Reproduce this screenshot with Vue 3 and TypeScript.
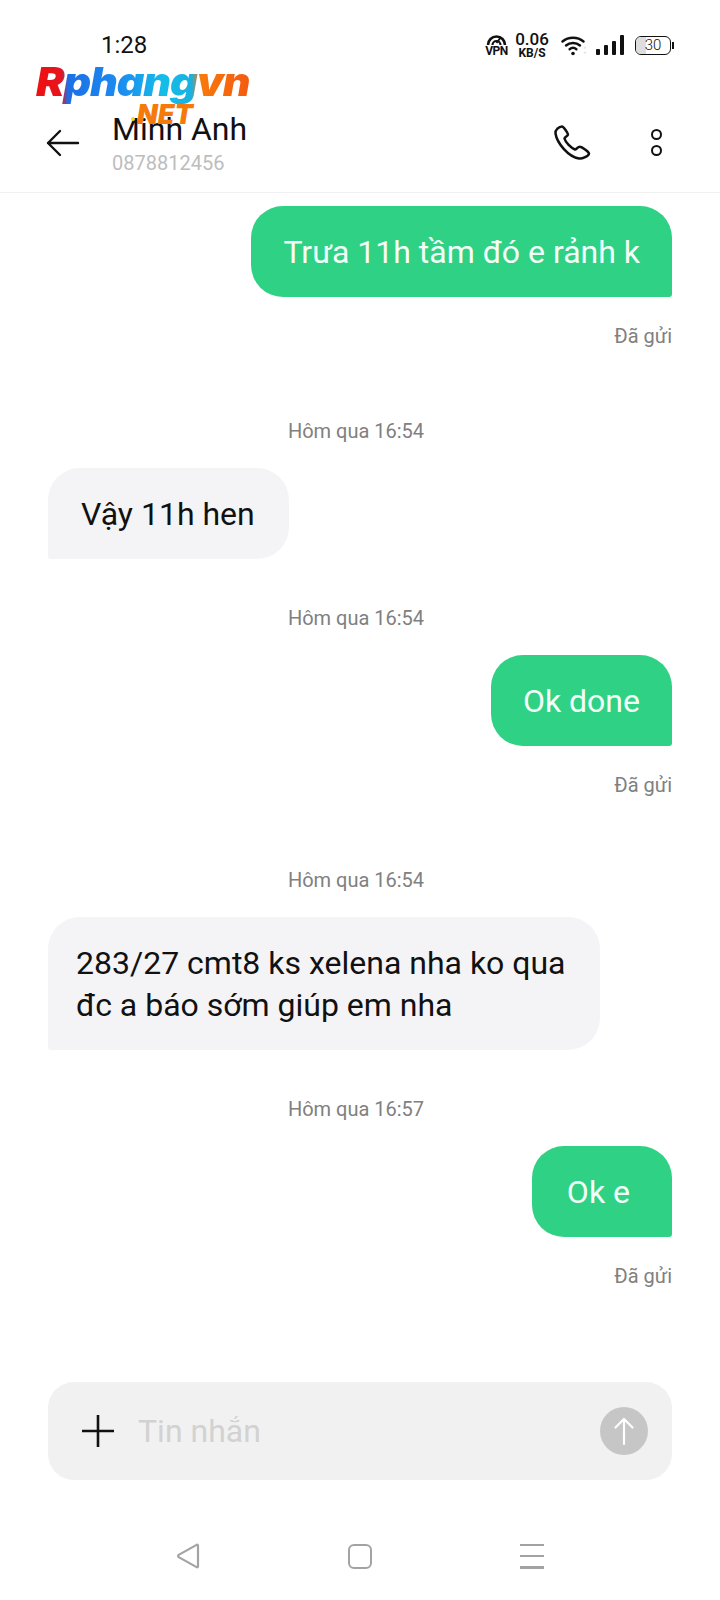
<template>
  <div class="phone">
    <div class="status-bar">
      <span class="clock">1:28</span>
      <div class="status-icons">
        <div class="vpn">
          <svg width="21" height="12" viewBox="0 0 21 12" fill="none" stroke="#111" stroke-width="2.6">
            <path d="M2 11a8.500 8.500 0 0 1 17 0" />
            <path d="M6.500 11a4 4 0 0 1 8 0" stroke-width="2.200" />
            <path d="M10.500 9l4.500-6" stroke-width="1.800" />
          </svg>
          <span>VPN</span>
        </div>
        <div class="speed">
          <span class="speed-value">0.06</span>
          <span class="speed-unit">KB/S</span>
        </div>
        <svg class="wifi" width="27" height="21" viewBox="0 0 27 21" fill="none" stroke="#111" stroke-width="2.400" stroke-linecap="round">
          <path d="M1.500 6.500c6-5 15-5 21 0" />
          <path d="M5 10.500c4-3.400 10-3.400 14 0" />
          <path d="M8.600 14.200c2-1.600 4.800-1.600 6.800 0" />
          <circle cx="12" cy="18.500" r="1.800" fill="#111" stroke="none" />
          <path d="M24 11.500l1.500 2h-3zM24 19l1.500-2h-3z" fill="#ddd" stroke="none" />
        </svg>
        <div class="signal">
          <i v-for="h in signalBars" :key="h" :style="{ height: h + 'px' }"></i>
        </div>
        <div class="battery">
          <div class="battery-body">
            <div class="battery-fill"></div>
            <span>30</span>
          </div>
          <div class="battery-tip"></div>
        </div>
      </div>
    </div>

    <div class="logo">
      <span class="logo-main">Rphangvn</span>
      <i class="logo-dot"></i>
      <span class="logo-net">NET</span>
    </div>

    <header class="header">
      <svg class="back" width="34" height="28" viewBox="0 0 34 28" fill="none" stroke="#111" stroke-width="2.400" stroke-linecap="round" stroke-linejoin="round">
        <path d="M32 14H2M14 2L2 14l12 12" />
      </svg>
      <div class="contact">
        <div class="contact-name">Minh Anh</div>
        <div class="contact-number">0878812456</div>
      </div>
      <svg class="call" width="38" height="36" viewBox="0 0 38 36" fill="none" stroke="#111" stroke-width="2.500" stroke-linejoin="round">
        <path d="M2.500 8.500C2 5 6 1.500 9 1.500c1.500 0 6 6.500 6 8s-3.500 2.500-3.500 4c1 4 6.500 9.500 10.500 11 1.500 0 3-3 5-2.700 2 .2 8.500 4.700 9 6.700 0 2.500-7 5.500-10 5C15 31.500 4 18 2.500 8.500z" />
      </svg>
      <div class="more">
        <i></i>
        <i></i>
      </div>
    </header>

    <main class="messages">
      <template v-for="item in thread" :key="item.id">
        <div v-if="item.time" class="time">{{ item.time }}</div>
        <div class="bubble" :class="[item.sent ? 'sent' : 'received', item.cls]">
          <div v-for="(line, i) in item.lines" :key="i">{{ line }}</div>
        </div>
        <div v-if="item.sent" class="delivered">Đã gửi</div>
      </template>
    </main>

    <div class="composer">
      <svg width="34" height="34" viewBox="0 0 34 34" stroke="#111" stroke-width="2.600">
        <path d="M17 1v32M1 17h32" />
      </svg>
      <span class="placeholder">Tin nhắn</span>
      <div class="send">
        <svg width="22" height="30" viewBox="0 0 22 30" fill="none" stroke="#fff" stroke-width="2.200" stroke-linecap="round" stroke-linejoin="round">
          <path d="M11 28V3M2.500 11.500L11 3l8.500 8.500" />
        </svg>
      </div>
    </div>

    <nav class="nav">
      <svg width="24" height="26" viewBox="0 0 24 26" fill="none" stroke="#a3a3a3" stroke-width="2.200" stroke-linejoin="round">
        <path d="M22 2.500v21c0 .8-.8 1-1.400.6L2.700 14.100c-.8-.5-.8-1.700 0-2.200L20.600 1.900c.6-.4 1.400-.1 1.400.6z" />
      </svg>
      <div class="nav-home"></div>
      <div class="nav-menu">
        <i></i>
        <i></i>
        <i></i>
      </div>
    </nav>
  </div>
</template>

<script setup lang="ts">
interface Message {
  id: number
  time?: string
  sent: boolean
  lines: string[]
  cls?: string
}

const signalBars = [6, 10, 14, 20]

const thread: Message[] = [
  { id: 1, sent: true, lines: ['Trưa 11h tầm đó e rảnh k'] },
  { id: 2, time: 'Hôm qua 16:54', sent: false, lines: ['Vậy 11h hen'] },
  { id: 3, time: 'Hôm qua 16:54', sent: true, lines: ['Ok done'] },
  {
    id: 4,
    time: 'Hôm qua 16:54',
    sent: false,
    lines: ['283/27 cmt8 ks xelena nha ko qua', 'đc a báo sớm giúp em nha'],
    cls: 'multi',
  },
  { id: 5, time: 'Hôm qua 16:57', sent: true, lines: ['Ok e'], cls: 'tiny' },
]
</script>

<style>
body {
  background: #fff;
}
</style>

<style scoped>
.phone {
  position: relative;
  display: flex;
  flex-direction: column;
  width: 720px;
  height: 1600px;
  overflow: hidden;
  background: #fff;
  font-family: Roboto, "Noto Sans", sans-serif;
  color: #111;
}

.status-bar {
  display: flex;
  align-items: center;
  justify-content: space-between;
  height: 30px;
  margin-top: 30px;
  padding: 0 46px 0 101px;
}

.clock {
  font-size: 24px;
  line-height: 30px;
}

.status-icons {
  display: flex;
  align-items: center;
}

.vpn {
  display: flex;
  flex-direction: column;
  align-items: center;
  width: 21px;
}

.vpn svg {
  display: block;
}

.vpn span {
  font-size: 12px;
  line-height: 11px;
  font-weight: 700;
  letter-spacing: -0.5px;
}

.speed {
  display: flex;
  flex-direction: column;
  align-items: center;
  margin-left: 7px;
  width: 36px;
}

.speed-value {
  font-size: 17px;
  line-height: 15px;
  font-weight: 500;
}

.speed-unit {
  font-size: 12px;
  line-height: 12px;
  font-weight: 700;
}

.wifi {
  margin-left: 11px;
}

.signal {
  display: flex;
  align-items: flex-end;
  gap: 4px;
  margin-left: 8px;
  height: 20px;
}

.signal i {
  width: 4px;
  background: #111;
  border-radius: 1px;
}

.battery {
  display: flex;
  align-items: center;
  margin-left: 11px;
}

.battery-body {
  position: relative;
  width: 36px;
  height: 19px;
  border: 1.500px solid #111;
  border-radius: 6px;
  display: flex;
  align-items: center;
  justify-content: center;
  box-sizing: border-box;
  overflow: hidden;
}

.battery-fill {
  position: absolute;
  left: 0;
  top: 0;
  bottom: 0;
  width: 30%;
  background: #ddd;
}

.battery-body span {
  position: relative;
  font-size: 15px;
  font-weight: 300;
  line-height: 15px;
}

.battery-tip {
  width: 2px;
  height: 7px;
  margin-left: 1px;
  background: #111;
}

.logo {
  position: absolute;
  left: 36px;
  top: 57px;
  width: 216px;
  height: 70px;
  font-family: Inter, "Liberation Sans", sans-serif;
  font-weight: 900;
  font-style: italic;
}

.logo-main {
  position: absolute;
  left: 0;
  top: 0;
  font-size: 40px;
  line-height: 50px;
  letter-spacing: -1px;
  white-space: nowrap;
  transform-origin: left top;
  transform: scaleX(1.07);
  background: linear-gradient(90deg, #ee1111 0%, #e6141f 12%, #1c6fe6 15%, #1c8df0 40%, #14bde8 60%, #1bb0e0 73%, #f77a0c 77%, #f55a10 100%);
  -webkit-background-clip: text;
  background-clip: text;
  color: transparent;
}

.logo-dot {
  position: absolute;
  left: 95px;
  top: 60px;
  width: 4px;
  height: 4px;
  border-radius: 50%;
  background: #f6d629;
}

.logo-net {
  position: absolute;
  left: 101px;
  top: 43px;
  font-size: 27px;
  line-height: 30px;
  color: #f57a0a;
}

.header {
  display: flex;
  align-items: center;
  height: 133px;
  padding: 33px 0 0 46px;
  box-sizing: border-box;
  border-bottom: 1px solid #f0f0f0;
  flex-shrink: 0;
}

.back {
  flex-shrink: 0;
}

.contact {
  margin-left: 32px;
  flex: 1;
}

.contact-name {
  font-size: 32px;
  line-height: 40px;
  color: #111;
}

.contact-number {
  margin-top: 1px;
  font-size: 20px;
  line-height: 26px;
  color: #bdbdbd;
}

.call {
  margin-right: 60px;
}

.more {
  display: flex;
  flex-direction: column;
  gap: 5px;
  margin-right: 58px;
}

.more i {
  display: block;
  width: 11px;
  height: 11px;
  box-sizing: border-box;
  border: 2.600px solid #111;
  border-radius: 50%;
}

.messages {
  flex: 1;
  display: flex;
  flex-direction: column;
  padding: 13px 48px 0;
}

.bubble {
  box-sizing: border-box;
  height: 91px;
  padding: 0 32px;
  display: flex;
  flex-direction: column;
  justify-content: center;
  font-size: 32px;
  line-height: 42px;
  white-space: nowrap;
}

.sent {
  align-self: flex-end;
  background: #2fd184;
  color: #f2fff8;
  border-radius: 32px 32px 3px 32px;
}

.received {
  align-self: flex-start;
  padding: 0 34px 0 33px;
  background: #f4f4f6;
  color: #111;
  border-radius: 32px 32px 32px 3px;
}

.multi {
  height: 133px;
  padding: 0 28px;
  width: 552px;
}

.tiny {
  padding: 0 42px 0 35px;
}

.delivered {
  align-self: flex-end;
  margin-top: 27px;
  font-size: 20px;
  line-height: 24px;
  color: #808080;
}

.time {
  align-self: center;
  margin-top: 71px;
  margin-right: 8px;
  margin-bottom: 25px;
  font-size: 20px;
  line-height: 24px;
  color: #808080;
}

.received + .time {
  margin-top: 47px;
}

.composer {
  display: flex;
  align-items: center;
  height: 98px;
  margin: 0 48px 63px;
  padding: 0 24px 0 33px;
  box-sizing: border-box;
  background: #f1f1f1;
  border-radius: 26px;
  flex-shrink: 0;
}

.placeholder {
  flex: 1;
  margin-left: 23px;
  font-size: 32px;
  color: #d2d2d2;
}

.send {
  display: flex;
  align-items: center;
  justify-content: center;
  width: 48px;
  height: 48px;
  border-radius: 50%;
  background: #c6c6c6;
}

.nav {
  display: flex;
  align-items: center;
  height: 26px;
  padding: 0 176px;
  margin-bottom: 31px;
  justify-content: space-between;
  flex-shrink: 0;
}

.nav-home {
  width: 24px;
  height: 25px;
  box-sizing: border-box;
  border: 2.200px solid #a3a3a3;
  border-radius: 6px;
}

.nav-menu {
  display: flex;
  flex-direction: column;
  justify-content: space-between;
  width: 24px;
  height: 25px;
}

.nav-menu i {
  display: block;
  height: 2.500px;
  background: #a3a3a3;
}
</style>
